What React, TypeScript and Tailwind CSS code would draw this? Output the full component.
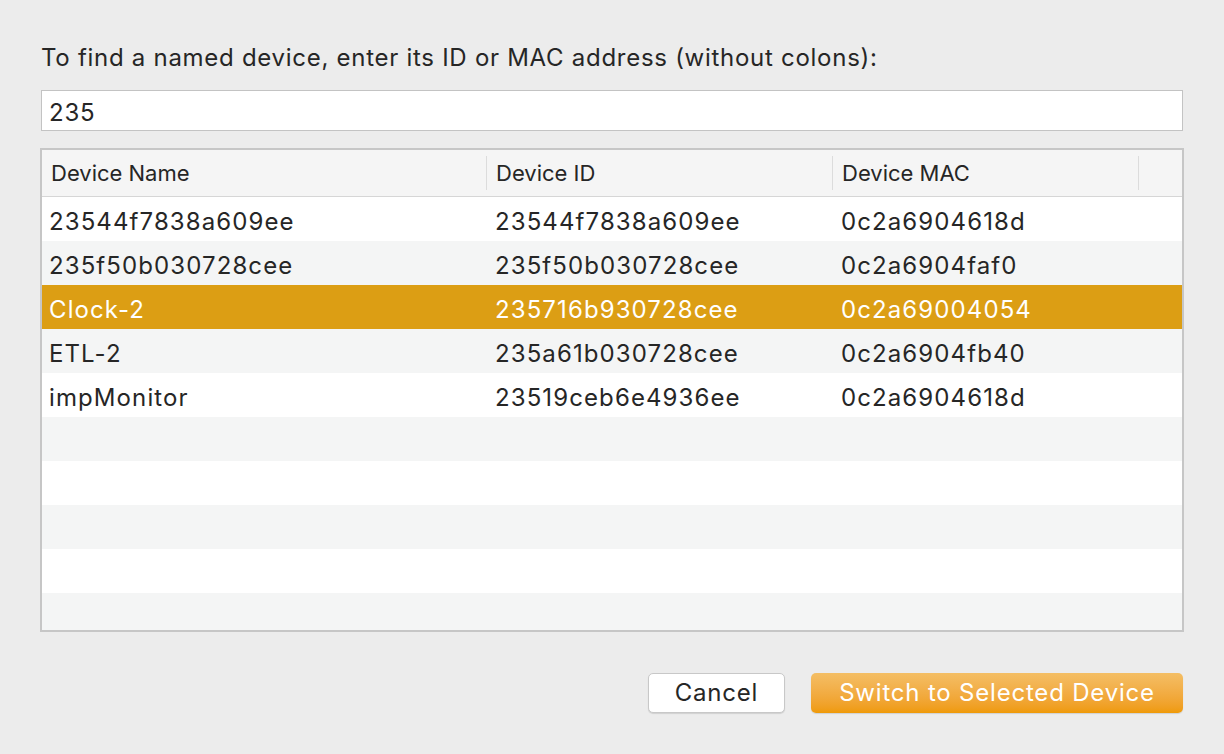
import React from "react";

const rows = [
  { name: "23544f7838a609ee", id: "23544f7838a609ee", mac: "0c2a6904618d" },
  { name: "235f50b030728cee", id: "235f50b030728cee", mac: "0c2a6904faf0" },
  { name: "Clock-2", id: "235716b930728cee", mac: "0c2a69004054" },
  { name: "ETL-2", id: "235a61b030728cee", mac: "0c2a6904fb40" },
  { name: "impMonitor", id: "23519ceb6e4936ee", mac: "0c2a6904618d" },
];

export default function App() {
  const selected = 2;
  const filler = Array.from({ length: 5 }, (_, i) => i + rows.length);

  return (
    <div
      className="w-[1224px] h-[754px] bg-[#ececec] text-[#262626] flex flex-col px-[40px] pt-[43px]"
      style={{ fontFamily: "Inter, 'Noto Sans', sans-serif" }}
    >
      <p className="text-[24px] leading-[30px] pl-[1px] tracking-[0.72px]">
        To find a named device, enter its ID or MAC address (without colons):
      </p>

      <div className="mt-[17px] mx-[1px] h-[41px] bg-white border border-[#c3c3c3] flex items-center px-[7px] pt-[5px] text-[24px] tracking-[0.8px]">
        235
      </div>

      {/* device table */}
      <div className="mt-[17px] h-[484px] border-2 border-[#c6c6c6] bg-white flex flex-col overflow-hidden">
        <div className="h-[47px] shrink-0 bg-[#f5f5f5] border-b border-[#d6d6d6] flex items-center text-[22px]">
          <div className="w-[445px] pl-[9px] border-r border-[#dcdcdc] h-[34px] flex items-center">Device Name</div>
          <div className="w-[346px] pl-[9px] border-r border-[#dcdcdc] h-[34px] flex items-center">Device ID</div>
          <div className="w-[306px] pl-[9px] border-r border-[#dcdcdc] h-[34px] flex items-center">Device MAC</div>
          <div className="flex-1" />
        </div>
        {rows.map((r, i) => (
          <div
            key={r.id}
            className={`h-[44px] shrink-0 flex items-center pt-[5px] text-[24px] tracking-[1.1px] ${
              i === selected
                ? "bg-[#dc9e14] text-white"
                : i % 2 === 1
                ? "bg-[#f4f5f5]"
                : "bg-white"
            }`}
          >
            <div className="w-[446px] pl-[7px]">{r.name}</div>
            <div className="w-[346px] pl-[7px]">{r.id}</div>
            <div className="w-[306px] pl-[7px]">{r.mac}</div>
          </div>
        ))}
        {filler.map((i) => (
          <div key={i} className={`h-[44px] shrink-0 ${i % 2 === 1 ? "bg-[#f4f5f5]" : "bg-white"}`} />
        ))}
      </div>

      <div className="mt-[41px] flex justify-end gap-[26px] pr-[1px]">
        <button className="w-[137px] h-[40px] rounded-[5px] bg-white border border-[#c8c8c8] shadow-[0_1px_1px_rgba(0,0,0,0.12)] text-[24px] tracking-[0.8px] text-[#262626]">
          Cancel
        </button>
        <button className="w-[372px] h-[40px] rounded-[5px] bg-gradient-to-b from-[#f4be64] to-[#ef9a05] shadow-[0_1px_1px_rgba(0,0,0,0.12)] text-[24px] tracking-[0.8px] text-white">
          Switch to Selected Device
        </button>
      </div>
    </div>
  );
}
